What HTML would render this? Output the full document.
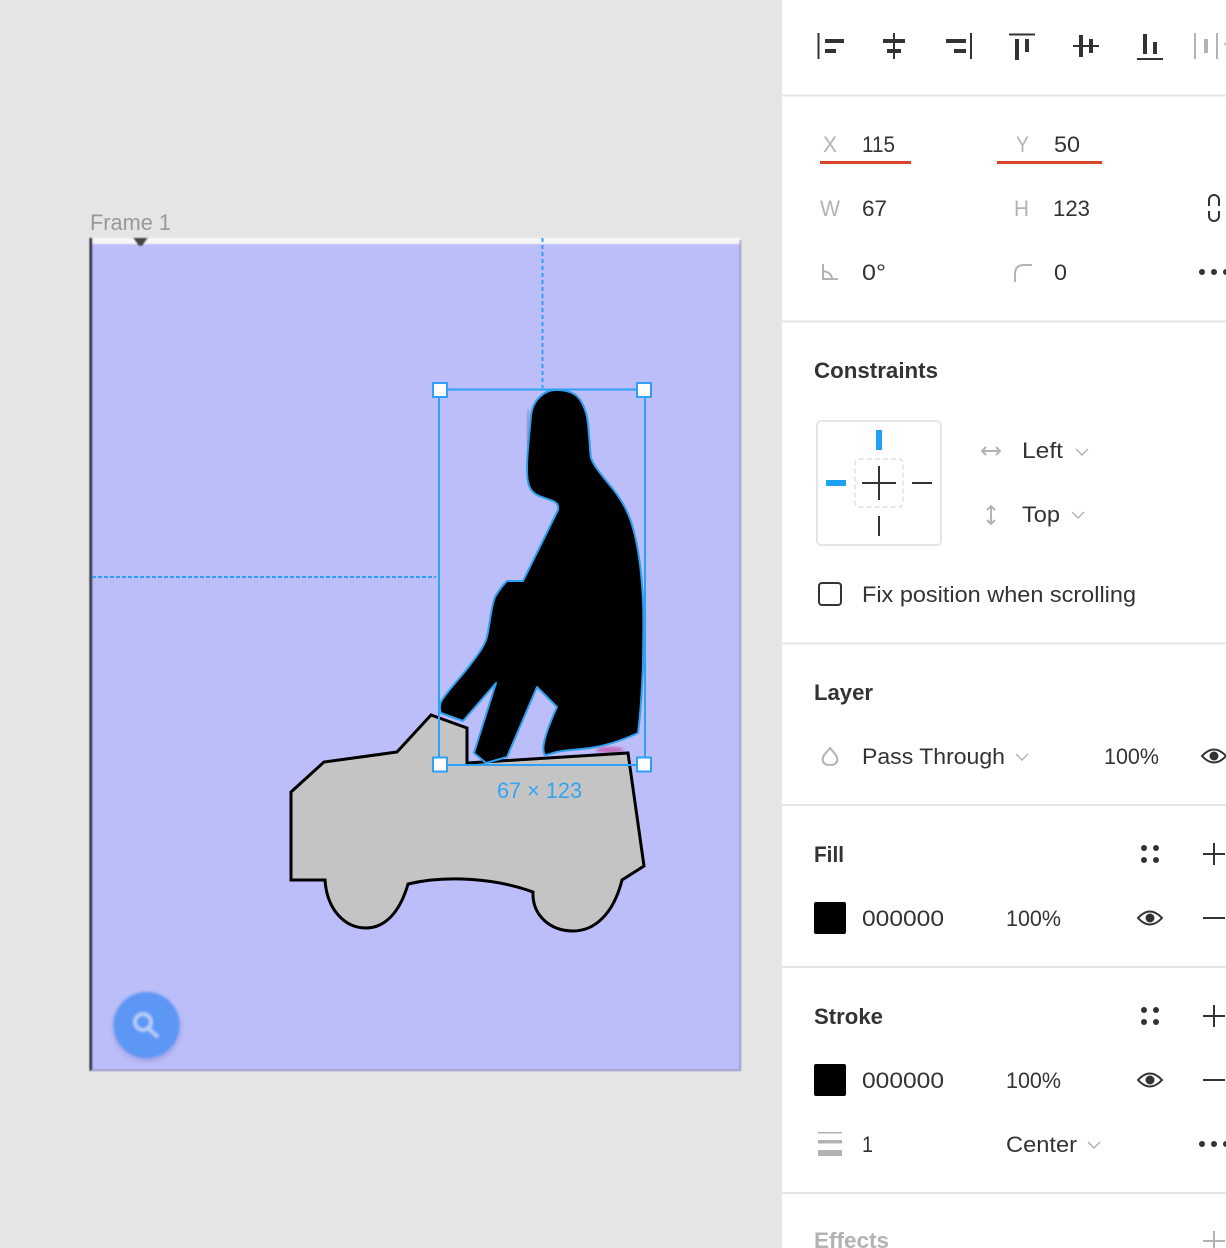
<!DOCTYPE html>
<html><head><meta charset="utf-8"><style>
html,body{margin:0;padding:0;background:#e5e5e5}
svg{display:block}
text{font-family:"Liberation Sans",sans-serif;font-size:22px;fill:#333}
.g{fill:#b3b3b3}
.b{font-weight:bold}
</style></head><body>
<svg width="1226" height="1248" viewBox="0 0 1226 1248" xmlns="http://www.w3.org/2000/svg">
<defs>
<filter id="s1"><feGaussianBlur stdDeviation="0.7"/></filter>
<filter id="s4"><feGaussianBlur stdDeviation="1.200"/></filter>
<filter id="s2"><feGaussianBlur stdDeviation="3"/></filter>
<filter id="s3"><feGaussianBlur stdDeviation="1.500"/></filter>
</defs>
<rect width="1226" height="1248" fill="#e5e5e5"/>
<text x="90" y="230" textLength="81" lengthAdjust="spacingAndGlyphs" style="fill:#999">Frame 1</text>

<!-- frame -->
<g filter="url(#s1)">
<rect x="91" y="238" width="650" height="833" fill="#bcbef9"/>
<rect x="91" y="238" width="650" height="6" fill="#f6f6f6"/>
<rect x="89.500" y="238" width="2.800" height="833" fill="#26273a"/>
<rect x="739.500" y="240" width="1.500" height="831" fill="#8f90bf"/>
<rect x="91" y="1069.500" width="650" height="1.500" fill="#8f90bf"/>
<path d="M133 238H148L142 246H139Z" fill="#444"/>
</g>
<circle cx="147" cy="1028" r="33" fill="#8a8ccf" opacity=".6" filter="url(#s2)"/>
<g filter="url(#s4)">
<circle cx="146.500" cy="1025" r="33" fill="#5c97f5"/>
<circle cx="143" cy="1022" r="8" fill="none" stroke="#bcd1f8" stroke-width="3.500"/>
<path d="M149 1029L158 1037" stroke="#bcd1f8" stroke-width="3.500" fill="none"/>
</g>
<ellipse cx="610" cy="750" rx="14" ry="3" fill="#c06ab8" filter="url(#s3)"/>
<path d="M529 410L527 445" stroke="#8080a8" stroke-width="2.500" filter="url(#s3)"/>
<path d="M469 732V758" stroke="#8080a8" stroke-width="2" filter="url(#s3)"/>

<!-- truck -->
<path d="M291 792L324 762L397 752L431 715L467 728V763L628 753L644 866L622 880C614 912 596 931 573 931C550 931 532 915 533 892C495 878 445 875 408 884C400 912 385 928 366 928C345 928 327 910 325 880H291Z" fill="#c4c4c4" stroke="#000" stroke-width="3" stroke-linejoin="miter"/>

<!-- figure -->
<path d="M556 390C568 390 577 393 582 403C588 414 588 424 589 435C590 445 590 452 591 458C594 466 600 473 608 483C620 497 628 510 633 528C640 553 642 580 643 600C644 625 643 650 643 665C642 690 641 710 638 733C625 739 610 745 590 748C575 750 565 750 557 752C552 753 548 755 545 755C543 752 543 748 544 743C546 732 552 718 557 707L537 687L507 757L486 763L474 753L496 683L463 721L441 713C439 708 440 703 442 700C450 688 462 676 470 665C477 656 483 648 486 640C490 628 490 610 495 597C499 590 503 585 507 581H523L558 510C559 505 557 503 553 501C546 498 538 497 533 492C528 487 527 480 527 468C527 450 530 430 531 415C533 400 544 390 556 390Z" fill="#000" stroke="#2e9ff0" stroke-width="2" stroke-linejoin="round"/>

<!-- selection -->
<path d="M542.500 238V388" stroke="#2ea0f5" stroke-width="2" stroke-dasharray="4 3" fill="none"/>
<path d="M92 577H436" stroke="#2ea0f5" stroke-width="2" stroke-dasharray="4 2" fill="none"/>
<rect x="439" y="389.500" width="206" height="375.500" fill="none" stroke="#2ea0f5" stroke-width="2"/>
<g fill="#fff" stroke="#2ea0f5" stroke-width="2">
<rect x="433" y="383" width="14" height="14"/>
<rect x="637" y="383" width="14" height="14"/>
<rect x="433" y="757.500" width="14" height="14"/>
<rect x="637" y="757.500" width="14" height="14"/>
</g>
<text x="497" y="798" textLength="85" lengthAdjust="spacingAndGlyphs" style="fill:#35a3ef">67 × 123</text>

<!-- panel -->
<rect x="782" y="0" width="444" height="1248" fill="#fff"/>
<g fill="#e5e5e5">
<rect x="782" y="94.500" width="444" height="2"/>
<rect x="782" y="320.500" width="444" height="2"/>
<rect x="782" y="642.500" width="444" height="2"/>
<rect x="782" y="804" width="444" height="2"/>
<rect x="782" y="966" width="444" height="2"/>
<rect x="782" y="1192" width="444" height="2"/>
</g>

<!-- align icons -->
<g fill="#333">
<rect x="817.500" y="33" width="2" height="26"/><rect x="825" y="39" width="19" height="4"/><rect x="825" y="49" width="11" height="4"/>
<rect x="893" y="33" width="2" height="26"/><rect x="883" y="39" width="22" height="4"/><rect x="887" y="49" width="14" height="4"/>
<rect x="970" y="33" width="2" height="26"/><rect x="946" y="39" width="20" height="4"/><rect x="954" y="49" width="12" height="4"/>
<rect x="1009" y="33.500" width="26" height="2"/><rect x="1015" y="39" width="4" height="21"/><rect x="1025" y="39" width="4" height="13"/>
<rect x="1073" y="45" width="26" height="2"/><rect x="1079" y="35" width="4" height="22"/><rect x="1089" y="39" width="4" height="14"/>
<rect x="1137" y="58" width="26" height="2"/><rect x="1143" y="34" width="4" height="20"/><rect x="1153" y="42" width="4" height="12"/>
</g>
<g fill="#b3b3b3">
<rect x="1194" y="33" width="2" height="26"/><rect x="1216" y="33" width="2" height="26"/><rect x="1204" y="39" width="4" height="14"/>
</g>
<path d="M1224 43l3 3" stroke="#b3b3b3" stroke-width="1.500" fill="none"/>

<!-- XYWH -->
<text class="g" x="823" y="152" textLength="14" lengthAdjust="spacingAndGlyphs">X</text>
<text x="862" y="152" textLength="33" lengthAdjust="spacingAndGlyphs">115</text>
<rect x="820" y="161" width="91" height="3" fill="#d9452b"/>
<text class="g" x="1016" y="152" textLength="13" lengthAdjust="spacingAndGlyphs">Y</text>
<text x="1054" y="152" textLength="26" lengthAdjust="spacingAndGlyphs">50</text>
<rect x="997" y="161" width="105" height="3" fill="#d9452b"/>
<text class="g" x="820" y="216" textLength="20" lengthAdjust="spacingAndGlyphs">W</text>
<text x="862" y="216" textLength="25" lengthAdjust="spacingAndGlyphs">67</text>
<text class="g" x="1014" y="216" textLength="15" lengthAdjust="spacingAndGlyphs">H</text>
<text x="1053" y="216" textLength="37" lengthAdjust="spacingAndGlyphs">123</text>
<path d="M1209 206V200a5 5 0 0 1 10 0V206M1209 211V216a5 5 0 0 0 10 0V211" fill="none" stroke="#333" stroke-width="2"/>
<path d="M823 264V279H838M823 271C829 272 832 275 832 279" fill="none" stroke="#b3b3b3" stroke-width="2"/>
<text x="862" y="280" textLength="24" lengthAdjust="spacingAndGlyphs">0°</text>
<path d="M1015 282V274Q1015 265 1024 265H1032" fill="none" stroke="#b3b3b3" stroke-width="2"/>
<text x="1054" y="280" textLength="13" lengthAdjust="spacingAndGlyphs">0</text>
<g fill="#333"><circle cx="1202" cy="272" r="3"/><circle cx="1214" cy="272" r="3"/><circle cx="1226" cy="272" r="3"/></g>

<!-- constraints -->
<text class="b" x="814" y="378" textLength="124" lengthAdjust="spacingAndGlyphs">Constraints</text>
<rect x="817" y="421" width="124" height="124" rx="4" fill="#fff" stroke="#e5e5e5" stroke-width="2"/>
<rect x="855" y="459" width="48" height="48" rx="4" fill="none" stroke="#e0e0e0" stroke-width="1.500" stroke-dasharray="5 3"/>
<rect x="876" y="430" width="6" height="20" fill="#1ea1f2"/>
<rect x="826" y="480" width="20" height="6" fill="#1ea1f2"/>
<g fill="#333">
<rect x="912" y="482" width="20" height="2"/>
<rect x="878" y="516" width="2" height="20"/>
<rect x="862" y="482" width="34" height="2"/>
<rect x="878" y="466" width="2" height="34"/>
</g>
<path d="M982 451H1000M986 447L982 451L986 455M996 447L1000 451L996 455" fill="none" stroke="#b3b3b3" stroke-width="2"/>
<text x="1022" y="458" textLength="41" lengthAdjust="spacingAndGlyphs">Left</text>
<path d="M1076 449L1082 455L1088 449" fill="none" stroke="#b3b3b3" stroke-width="1.500"/>
<path d="M991 506V524M987 510L991 506L995 510M987 520L991 524L995 520" fill="none" stroke="#b3b3b3" stroke-width="2"/>
<text x="1022" y="522" textLength="38" lengthAdjust="spacingAndGlyphs">Top</text>
<path d="M1072 512L1078 518L1084 512" fill="none" stroke="#b3b3b3" stroke-width="1.500"/>
<rect x="819" y="583" width="22" height="22" rx="3" fill="none" stroke="#333" stroke-width="2"/>
<text x="862" y="602" textLength="274" lengthAdjust="spacingAndGlyphs">Fix position when scrolling</text>

<!-- layer -->
<text class="b" x="814" y="700" textLength="59" lengthAdjust="spacingAndGlyphs">Layer</text>
<path d="M830 748L835 754C839 759 838 765 830 765C822 765 821 759 825 754Z" fill="none" stroke="#b3b3b3" stroke-width="2"/>
<text x="862" y="764" textLength="143" lengthAdjust="spacingAndGlyphs">Pass Through</text>
<path d="M1016 754L1022 760L1028 754" fill="none" stroke="#b3b3b3" stroke-width="1.500"/>
<text x="1104" y="764" textLength="55" lengthAdjust="spacingAndGlyphs">100%</text>
<path d="M1202 756Q1214 743 1226 756Q1214 769 1202 756Z" fill="none" stroke="#333" stroke-width="2"/>
<circle cx="1214" cy="756" r="4.500" fill="#333"/>

<!-- fill -->
<text class="b" x="814" y="862" textLength="30" lengthAdjust="spacingAndGlyphs">Fill</text>
<g fill="#333"><circle cx="1144" cy="848" r="3"/><circle cx="1156" cy="848" r="3"/><circle cx="1144" cy="860" r="3"/><circle cx="1156" cy="860" r="3"/></g>
<path d="M1203 854H1225M1214 843V865" stroke="#333" stroke-width="2" fill="none"/>
<rect x="814" y="902" width="32" height="32" rx="2" fill="#000"/>
<text x="862" y="926" textLength="82" lengthAdjust="spacingAndGlyphs">000000</text>
<text x="1006" y="926" textLength="55" lengthAdjust="spacingAndGlyphs">100%</text>
<path d="M1138 918Q1150 905 1162 918Q1150 931 1138 918Z" fill="none" stroke="#333" stroke-width="2"/>
<circle cx="1150" cy="918" r="4.500" fill="#333"/>
<path d="M1203 918H1225" stroke="#333" stroke-width="2"/>

<!-- stroke -->
<text class="b" x="814" y="1024" textLength="69" lengthAdjust="spacingAndGlyphs">Stroke</text>
<g fill="#333"><circle cx="1144" cy="1010" r="3"/><circle cx="1156" cy="1010" r="3"/><circle cx="1144" cy="1022" r="3"/><circle cx="1156" cy="1022" r="3"/></g>
<path d="M1203 1016H1225M1214 1005V1027" stroke="#333" stroke-width="2" fill="none"/>
<rect x="814" y="1064" width="32" height="32" rx="2" fill="#000"/>
<text x="862" y="1088" textLength="82" lengthAdjust="spacingAndGlyphs">000000</text>
<text x="1006" y="1088" textLength="55" lengthAdjust="spacingAndGlyphs">100%</text>
<path d="M1138 1080Q1150 1067 1162 1080Q1150 1093 1138 1080Z" fill="none" stroke="#333" stroke-width="2"/>
<circle cx="1150" cy="1080" r="4.500" fill="#333"/>
<path d="M1203 1080H1225" stroke="#333" stroke-width="2"/>
<g fill="#b3b3b3"><rect x="818" y="1132" width="24" height="1.500"/><rect x="818" y="1140" width="24" height="3.500"/><rect x="818" y="1150" width="24" height="6"/></g>
<text x="862" y="1152" textLength="11" lengthAdjust="spacingAndGlyphs">1</text>
<text x="1006" y="1152" textLength="71" lengthAdjust="spacingAndGlyphs">Center</text>
<path d="M1088 1142L1094 1148L1100 1142" fill="none" stroke="#b3b3b3" stroke-width="1.500"/>
<g fill="#333"><circle cx="1202" cy="1144" r="3"/><circle cx="1214" cy="1144" r="3"/><circle cx="1226" cy="1144" r="3"/></g>

<!-- effects -->
<text class="b g" x="814" y="1248" textLength="75" lengthAdjust="spacingAndGlyphs">Effects</text>
<path d="M1203 1241H1225M1214 1231V1248" stroke="#b3b3b3" stroke-width="2" fill="none"/>
</svg>
</body></html>
